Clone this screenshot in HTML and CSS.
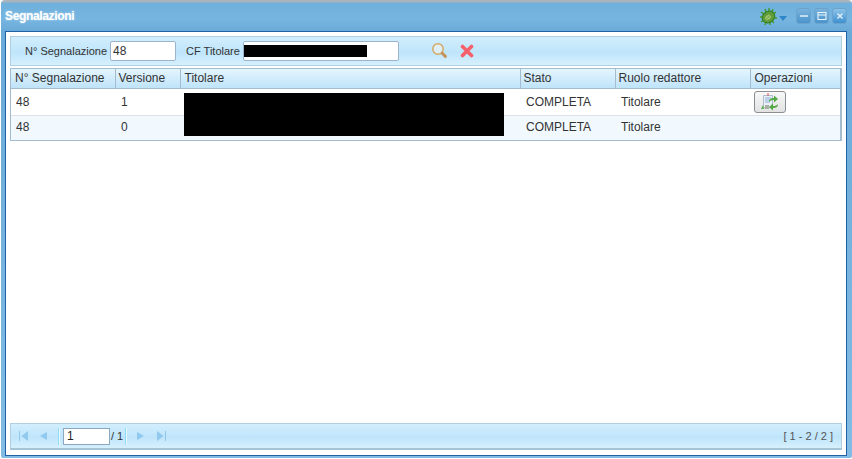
FILE: index.html
```html
<!DOCTYPE html>
<html lang="it">
<head>
<meta charset="utf-8">
<title>Segnalazioni</title>
<link rel="stylesheet" href="styles.css">
</head>
<body>
<div class="window">
  <header class="titlebar">
    <span class="title">Segnalazioni</span>
    <div class="tools">
      <svg class="bug" width="17" height="18" viewBox="0 0 17 18">
        <path d="M5 1l1 3M9 0v3M13 1l-1 3M16 4l-3 2M1 4l3 2M0 9h3M1 14l3-2M5 17l1-3M10 17l0-3M14 15l-2-2M17 10h-3" stroke="#3f9a2a" stroke-width="1.4" fill="none"/>
        <ellipse cx="8.5" cy="9" rx="6.6" ry="5.6" fill="#5f9c38" stroke="#2f7a22" transform="rotate(-38 8.5 9)"/>
        <ellipse cx="8" cy="9.5" rx="3.4" ry="2.2" fill="#9cc46c" transform="rotate(-38 8 9.5)"/>
        <path d="M5.5 12l5-5" stroke="#6e9e48"/>
      </svg>
      <span class="caret"></span>
      <div class="winbtns">
        <button class="winbtn" aria-label="Riduci"><svg width="10" height="10" viewBox="0 0 10 10"><path d="M1 5h8" stroke="#eaf5fc" stroke-width="1.4"/></svg></button>
        <button class="winbtn" aria-label="Ingrandisci"><svg width="10" height="10" viewBox="0 0 10 10"><path d="M1 1.5h8v7H1zM1 4h8" fill="none" stroke="#eaf5fc" stroke-width="1.1"/></svg></button>
        <button class="winbtn close" aria-label="Chiudi"><svg width="10" height="10" viewBox="0 0 10 10"><path d="M2.5 2.5l5 5M7.5 2.5l-5 5" stroke="#eaf5fc" stroke-width="1.2"/></svg></button>
      </div>
    </div>
  </header>
  <main class="body">
    <div class="searchbar">
      <label class="lbl lbl-first">N° Segnalazione</label>
      <span class="input input-num">48</span>
      <label class="lbl lbl-cf">CF Titolare</label>
      <span class="input input-cf"><span class="redact-cf"></span></span>
      <svg class="ico-search" width="18" height="18" viewBox="0 0 18 18">
        <circle cx="7" cy="7" r="5.2" fill="#fdf8ea" fill-opacity=".45" stroke="#d6a866" stroke-width="1.5"/>
        <path d="M11.2 11.2l3.2 3.2" stroke="#c4935a" stroke-width="3" stroke-linecap="round"/>
      </svg>
      <svg class="ico-cancel" width="14" height="14" viewBox="0 0 14 14">
        <path d="M2.5 2.5l9 9M11.5 2.5l-9 9" stroke="#f4606c" stroke-width="3.6" stroke-linecap="round"/>
      </svg>
    </div>
    <div class="grid">
      <table>
        <colgroup>
          <col class="c1"><col class="c2"><col class="c3"><col class="c4"><col class="c5"><col class="c6">
        </colgroup>
        <thead>
          <tr><th>N° Segnalazione</th><th class="th-tight">Versione</th><th>Titolare</th><th class="th-tight">Stato</th><th class="th-tight">Ruolo redattore</th><th>Operazioni</th></tr>
        </thead>
        <tbody>
          <tr class="r1">
            <td>48</td><td class="ver">1</td>
            <td class="tit"><span class="redact"></span></td>
            <td class="st">COMPLETA</td><td class="ru">Titolare</td>
            <td class="op"><button class="opbtn" aria-label="Apri">
              <svg width="20" height="20" viewBox="0 0 20 20">
                <path d="M3.5 3.5h9v12h-9z" fill="#e8eff6" stroke="#aebccc"/>
                <path d="M5 6h6M5 8h6M5 10h5" stroke="#8fb0d8"/>
                <path d="M8 1v3" stroke="#e05050"/>
                <path d="M1 17l2-4 1 4z" fill="#58b04c"/>
                <path d="M5 13h4v4H5z" fill="#a8b0a4"/>
                <path d="M9 10c0-3 2-4 5-4V3.5L18 7l-4 3.5V8c-2 0-4 .5-5 2z" fill="#52a844"/>
                <path d="M18 12c0 3-2 4-5 4v2.5L9 15l4-3.5V14c2 0 4-.5 5-2z" fill="#52a844"/>
              </svg>
            </button></td>
          </tr>
          <tr class="r2">
            <td>48</td><td class="ver">0</td><td></td>
            <td class="st">COMPLETA</td><td class="ru">Titolare</td><td></td>
          </tr>
        </tbody>
      </table>
    </div>
    <div class="spacer"></div>
    <footer class="pager">
      <svg class="pg pg-first" width="12" height="10" viewBox="0 0 12 10"><path d="M1.5 0v10" stroke="#90c8ee"/><path d="M10 0v10L3.5 5z" fill="#90c8ee"/></svg>
      <svg class="pg pg-prev" width="9" height="10" viewBox="0 0 9 10"><path d="M8 1v8L1 5z" fill="#90c8ee"/></svg>
      <span class="sep sep-a"></span>
      <span class="pageinput">1</span>
      <span class="pagetotal">/ 1</span>
      <span class="sep sep-b"></span>
      <svg class="pg pg-next" width="9" height="10" viewBox="0 0 9 10"><path d="M1 1v8l7-4z" fill="#90c8ee"/></svg>
      <svg class="pg pg-last" width="12" height="10" viewBox="0 0 12 10"><path d="M10.5 0v10" stroke="#90c8ee"/><path d="M2 0v10l6.5-5z" fill="#90c8ee"/></svg>
      <span class="range">[ 1 - 2 / 2 ]</span>
    </footer>
  </main>
</div>
</body>
</html>
```

FILE: styles.css
```css
* { box-sizing: border-box; }
html, body { margin: 0; height: 100%; background: #fff; }
body { font-family: "Liberation Sans", Arial, sans-serif; font-size: 12px; color: #333; overflow: hidden; }

.window {
  height: 458px;
  width: 851px;
  margin-left: 1px;
  display: flex;
  flex-direction: column;
  padding: 0 1px 0 0;
  border-radius: 4px 4px 2px 2px;
  background: linear-gradient(#a9b4bc 0, #a9b4bc 2px, #6fb0dc 3px, #76b5e0 20px, #6aaad8 31px, #82bce4 100%);
}
.titlebar {
  height: 31px;
  flex: none;
  display: flex;
  align-items: center;
  justify-content: space-between;
  padding: 1px 4px 0 4px;
}
.title { font-weight: bold; font-size: 12px; letter-spacing: -0.35px; color: #fff; text-shadow: 0 0 2px #cfe6f6; }
.tools { display: flex; align-items: center; }
.bug { margin: 2px 2px 0 0; }
.caret { width: 0; height: 0; border: 4px solid transparent; border-top: 5px solid #2f86c8; border-bottom: 0; margin-right: 9px; margin-top: 5px; }
.winbtns { display: flex; gap: 3px; }
.winbtn {
  width: 15px; height: 16px; padding: 0; display: flex; align-items: center; justify-content: center;
  border: 1px solid #6ba3cc; border-radius: 3px;
  background: linear-gradient(#78b2dc, #4a94cc);
}
.winbtn.close { background: linear-gradient(#8cc2e8, #3f90d0); }

.body {
  flex: 1;
  margin: 0 4px 2px 4px;
  min-height: 0;
  display: flex;
  flex-direction: column;
  background: #fff;
  border: 1px solid #1e62a8;
  padding: 4px 4px 5px 4px;
}
.searchbar {
  height: 30px;
  flex: none;
  display: flex;
  align-items: center;
  border: 1px solid #b0cfe0;
  background: linear-gradient(#d2eefd, #bfe5fb 55%, #d6f0fd);
  font-size: 11px;
}
.lbl { color: #333; }
.lbl-first { margin-left: 14px; margin-right: 3px; }
.lbl-cf { margin-left: 10px; margin-right: 3px; }
.input {
  height: 20px; background: #fff; border: 1px solid #9db5cc; border-radius: 2px;
  display: flex; align-items: center; padding-left: 2px; font-size: 12px; color: #333;
}
.input-num { width: 66px; }
.input-cf { width: 156px; padding-left: 0; }
.redact-cf { display: block; width: 123px; height: 12px; background: #000; }
.ico-search { margin-left: 32px; }
.ico-cancel { margin-left: 11px; }

.grid { margin-top: 2px; flex: none; border: 1px solid #a4bccf; border-width: 1px 2px 2px 1px; height: 73px; }
table { border-collapse: collapse; table-layout: fixed; width: 829px; }
.c1 { width: 104px; } .c2 { width: 65px; } .c3 { width: 340px; } .c4 { width: 95px; } .c5 { width: 135px; } .c6 { width: 90px; }
th {
  height: 19px; padding: 0 0 0 4px; text-align: left; font-weight: normal; font-size: 12px; color: #333;
  background: linear-gradient(#e4f5fe, #bfe3f9);
  border-right: 1px solid #a4bccf;
  border-bottom: 1px solid #a4bccf;
}
th.th-tight { padding-left: 3px; }
th:last-child { border-right: 0; }
td { padding: 0 0 0 5px; font-size: 12px; color: #333; }
.r1 td { height: 27px; border-bottom: 1px solid #dde3e8; background: #fff; }
.r2 td { height: 25px; padding-bottom: 2px; background: #f1f9fe; }
.ver { padding-left: 6px; }
td.st { padding-left: 6px; }
.ru { padding-left: 6px; }
.tit { position: relative; }
.redact { position: absolute; left: 4px; top: 4px; width: 320px; height: 43px; background: #000; }
.op { padding: 0 0 0 4px; }
.opbtn {
  width: 32px; height: 22px; padding: 0; display: flex; align-items: center; justify-content: center;
  border: 1px solid #8a8f94; border-radius: 3px;
  background: linear-gradient(#f8f8f8, #e2e2e2);
}

.spacer { flex: 1; }
.pager {
  height: 27px;
  flex: none;
  display: flex;
  align-items: center;
  border: 1px solid #b0cfe0;
  border-bottom: 2px solid #a4c4d4;
  background: linear-gradient(#d2eefd, #bfe5fb 55%, #d6f0fd);
  padding-left: 7px;
}
.pg { flex: none; }
.pg-prev { margin-left: 9px; }
.sep { height: 17px; background: #8fdcf8; border-right: 1px solid #eaf8ff; width: 2px; }
.sep-a { margin-left: 10px; margin-right: 3px; }
.sep-b { margin-left: 2px; }
.pageinput { width: 47px; height: 17px; background: #fff; border: 1px solid #8aa8c0; padding-left: 3px; line-height: 15px; font-size: 12px; color: #222; }
.pagetotal { margin-left: 1px; font-size: 11px; color: #333; width: 12px; white-space: nowrap; }
.pg-next { margin-left: 9px; }
.pg-last { margin-left: 10px; }
.range { margin-left: auto; margin-right: 8px; font-size: 11px; color: #555; }
```
